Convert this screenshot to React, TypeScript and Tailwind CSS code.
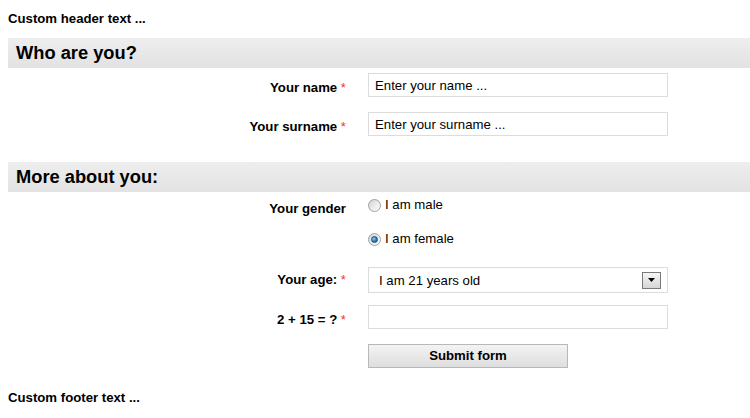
const Req = () => <span className="font-normal text-[#ee3333]"> *</span>;

const SectionBar = ({ title }: { title: string }) => (
  <h2 className="h-[30px] bg-gradient-to-b from-[#eeeeee] to-[#e2e2e2] pl-2 text-[18.3px] leading-[30px] font-bold">
    {title}
  </h2>
);

const Radio = ({ checked, label }: { checked?: boolean; label: string }) => (
  <label className="flex h-[16px] items-center gap-[4px] leading-[16px]">
    <span className="flex h-[13px] w-[13px] items-center justify-center rounded-full border border-[#a0a0a0] bg-gradient-to-br from-[#d4d4d4] to-[#ffffff]">
      {checked && (
        <span className="h-[7px] w-[7px] rounded-full border border-[#1c4f7a] bg-[radial-gradient(circle_at_35%_35%,#8fd0f5,#1d79b8_60%,#0e4f83)]" />
      )}
    </span>
    <span>{label}</span>
  </label>
);

export default function App() {
  return (
    <div className="min-h-[418px] bg-white pt-[11px] pl-2 font-['Liberation_Sans',Arial,sans-serif] text-[13.2px] text-black">
      <p className="leading-[15px] font-bold">Custom header text ...</p>

      <div className="mt-[12px]">
        <SectionBar title="Who are you?" />
      </div>

      <div className="mt-[5px] flex items-start">
        <div className="w-[338px] pt-[7px] text-right leading-[16px] font-bold">
          Your name<Req />
        </div>
        <input
          className="ml-[22px] h-[24px] w-[300px] border border-[#dcdcdc] px-[6px] text-[13.2px] outline-none"
          defaultValue="Enter your name ..."
        />
      </div>

      <div className="mt-[15px] flex items-start">
        <div className="w-[338px] pt-[7px] text-right leading-[16px] font-bold">
          Your surname<Req />
        </div>
        <input
          className="ml-[22px] h-[24px] w-[300px] border border-[#dcdcdc] px-[6px] text-[13.2px] outline-none"
          defaultValue="Enter your surname ..."
        />
      </div>

      <div className="mt-[26px]">
        <SectionBar title="More about you:" />
      </div>

      <div className="mt-[5px] flex items-start">
        <div className="w-[338px] pt-[4px] text-right leading-[16px] font-bold">
          Your gender
        </div>
        <div className="ml-[22px] flex flex-col gap-[18px]">
          <Radio label="I am male" />
          <Radio label="I am female" checked />
        </div>
      </div>

      <div className="mt-[20px] flex items-start">
        <div className="w-[338px] pt-[5px] text-right leading-[16px] font-bold">
          Your age:<Req />
        </div>
        <div className="ml-[22px] flex h-[26px] w-[300px] items-center justify-between border border-[#dcdcdc] pr-[6px] pl-[10px]">
          <span className="leading-[15px]">I am 21 years old</span>
          <span className="flex h-[17px] w-[19px] items-center justify-center border border-[#7a7a7a] bg-gradient-to-b from-[#f6f6f6] to-[#d6d6d6]">
            <svg width="7" height="4" viewBox="0 0 7 4">
              <path d="M0 0h7L3.5 4z" fill="#000" />
            </svg>
          </span>
        </div>
      </div>

      <div className="mt-[12px] flex items-start">
        <div className="w-[338px] pt-[7px] text-right leading-[16px] font-bold">
          2 + 15 = ?<Req />
        </div>
        <input className="ml-[22px] h-[24px] w-[300px] border border-[#dcdcdc] px-[6px] text-[13.2px] outline-none" />
      </div>

      <div className="mt-[15px] flex">
        <button className="ml-[360px] h-[24px] w-[200px] border border-[#b8b8b8] bg-gradient-to-b from-[#f3f3f3] to-[#dedede] text-[13.2px] leading-[22px] font-bold">
          Submit form
        </button>
      </div>

      <p className="mt-[22px] leading-[15px] font-bold">Custom footer text ...</p>
    </div>
  );
}
